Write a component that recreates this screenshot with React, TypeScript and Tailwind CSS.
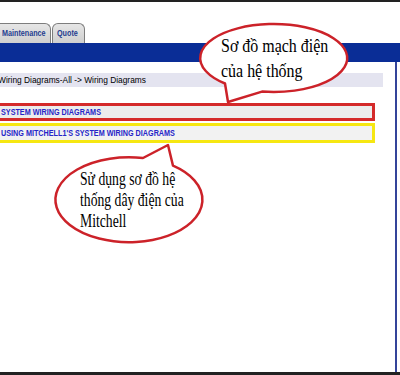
import React from 'react';

const sans = "font-['Liberation_Sans',Arial,sans-serif]";
const serif = "font-['Liberation_Serif','Times_New_Roman',serif]";

function Tabs() {
  return (
    <div className="flex h-[20px] items-end gap-px">
      <div className="-ml-[10px] flex h-[20px] w-[61px] items-center rounded-tr-[6px] border border-b-0 border-[#7d7d7d] bg-gradient-to-b from-[#e6e6e6] to-[#cfcfcf] pl-[11px]">
        <span className="origin-left scale-x-[0.8] text-[9px] font-bold text-[#1f3d8f]">Maintenance</span>
      </div>
      <div className="flex h-[20px] w-[33px] items-center rounded-t-[6px] border border-b-0 border-[#7d7d7d] bg-gradient-to-b from-[#e6e6e6] to-[#cfcfcf] pl-[4px]">
        <span className="origin-left scale-x-[0.8] text-[9px] font-bold text-[#1f3d8f]">Quote</span>
      </div>
    </div>
  );
}

function Bubbles() {
  return (
    <>
      <svg className="pointer-events-none absolute left-0 top-0" width="400" height="375" viewBox="0 0 400 375">
        <path
          d="M 262 91.6 L 228 102 L 225 83.5 A 73.5 34 0 1 1 262 91.6 Z"
          fill="#fff"
          stroke="#cc2229"
          strokeWidth="2.5"
          strokeLinejoin="round"
        />
        <path
          d="M 143 158 L 168 145 L 173 165.7 A 73.5 42.5 0 1 1 143 158 Z"
          fill="#fff"
          stroke="#cc2229"
          strokeWidth="2.5"
          strokeLinejoin="round"
        />
      </svg>
      <div className={`absolute left-[221px] top-[33px] origin-left scale-x-[0.84] whitespace-nowrap text-[19px] leading-[25px] text-black ${serif}`}>
        <div>Sơ đồ mạch điện</div>
        <div>của hệ thống</div>
      </div>
      <div className={`absolute left-[80px] top-[168px] origin-left scale-x-[0.72] whitespace-nowrap text-[19px] leading-[21px] text-black ${serif}`}>
        <div>Sử dụng sơ đồ hệ</div>
        <div>thống dây điện của</div>
        <div>Mitchell</div>
      </div>
    </>
  );
}

export default function App() {
  return (
    <div className={`relative flex h-[375px] w-[400px] flex-col overflow-hidden bg-white ${sans}`}>
      <div className="h-[2px] bg-[#222]" />
      <div className="h-[21px]" />
      <Tabs />
      <div className="h-[19px] bg-[#0a2d96]" />

      <div className="flex flex-1">
        <div className="w-[395px]">
          <div className="mt-[11px] flex h-[14px] w-[383px] items-center overflow-hidden bg-[#e4e4f0]">
            <span className="-ml-[2px] origin-left scale-x-[0.88] whitespace-nowrap text-[9.5px] text-black">
              Wiring Diagrams-All -&gt; Wiring Diagrams
            </span>
          </div>

          <div className="mt-[16px] flex h-[18px] w-[375px] items-center border-[3px] border-l-0 border-[#d42a2a] bg-[#ececec]">
            <span className="ml-px origin-left scale-x-[0.85] whitespace-nowrap text-[8.5px] font-bold text-[#2626c8]">
              SYSTEM WIRING DIAGRAMS
            </span>
          </div>

          <div className="mt-[2px] flex h-[20px] w-[375px] items-center border-[3px] border-l-0 border-[#f6e712] bg-[#f2f2f2]">
            <span className="ml-px origin-left scale-x-[0.85] whitespace-nowrap text-[8.5px] font-bold text-[#2626c8]">
              USING MITCHELL1&apos;S SYSTEM WIRING DIAGRAMS
            </span>
          </div>
        </div>
        <div className="w-[2px] bg-[#34449a]" />
      </div>

      <div className="h-[3px] bg-[#222]" />
      <Bubbles />
    </div>
  );
}
